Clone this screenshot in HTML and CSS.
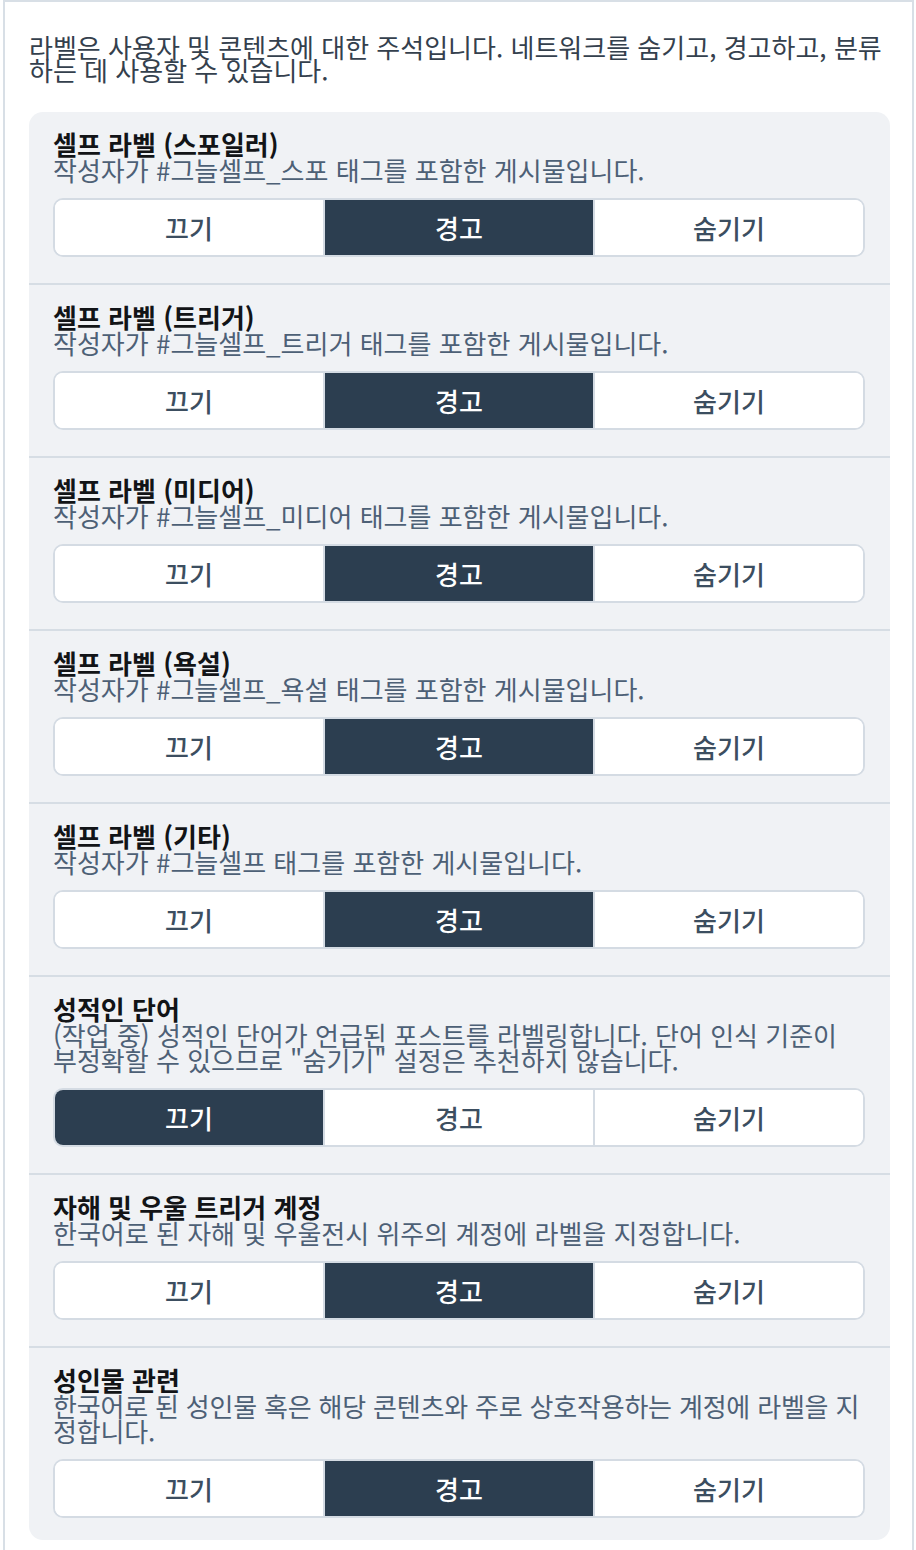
FILE: index.html
```html
<!DOCTYPE html>
<html lang="ko">
<head>
<meta charset="utf-8">
<title>라벨 설정</title>
<link rel="stylesheet" href="styles.css">
</head>
<body>
<div class="frame">
  <p class="intro">라벨은 사용자 및 콘텐츠에 대한 주석입니다. 네트워크를 숨기고, 경고하고, 분류하는 데 사용할 수 있습니다.</p>
  <div class="card">
    <section class="item">
      <h3 class="title">셀프 라벨 (스포일러)</h3>
      <p class="desc">작성자가 #그늘셀프_스포 태그를 포함한 게시물입니다.</p>
      <div class="seg"><button class="opt">끄기</button><button class="opt on">경고</button><button class="opt">숨기기</button></div>
    </section>
    <section class="item">
      <h3 class="title">셀프 라벨 (트리거)</h3>
      <p class="desc">작성자가 #그늘셀프_트리거 태그를 포함한 게시물입니다.</p>
      <div class="seg"><button class="opt">끄기</button><button class="opt on">경고</button><button class="opt">숨기기</button></div>
    </section>
    <section class="item">
      <h3 class="title">셀프 라벨 (미디어)</h3>
      <p class="desc">작성자가 #그늘셀프_미디어 태그를 포함한 게시물입니다.</p>
      <div class="seg"><button class="opt">끄기</button><button class="opt on">경고</button><button class="opt">숨기기</button></div>
    </section>
    <section class="item">
      <h3 class="title">셀프 라벨 (욕설)</h3>
      <p class="desc">작성자가 #그늘셀프_욕설 태그를 포함한 게시물입니다.</p>
      <div class="seg"><button class="opt">끄기</button><button class="opt on">경고</button><button class="opt">숨기기</button></div>
    </section>
    <section class="item">
      <h3 class="title">셀프 라벨 (기타)</h3>
      <p class="desc">작성자가 #그늘셀프 태그를 포함한 게시물입니다.</p>
      <div class="seg"><button class="opt">끄기</button><button class="opt on">경고</button><button class="opt">숨기기</button></div>
    </section>
    <section class="item">
      <h3 class="title">성적인 단어</h3>
      <p class="desc">(작업 중) 성적인 단어가 언급된 포스트를 라벨링합니다. 단어 인식 기준이 부정확할 수 있으므로 "숨기기" 설정은 추천하지 않습니다.</p>
      <div class="seg"><button class="opt on">끄기</button><button class="opt">경고</button><button class="opt">숨기기</button></div>
    </section>
    <section class="item">
      <h3 class="title">자해 및 우울 트리거 계정</h3>
      <p class="desc">한국어로 된 자해 및 우울전시 위주의 계정에 라벨을 지정합니다.</p>
      <div class="seg"><button class="opt">끄기</button><button class="opt on">경고</button><button class="opt">숨기기</button></div>
    </section>
    <section class="item last">
      <h3 class="title">성인물 관련</h3>
      <p class="desc tight">한국어로 된 성인물 혹은 해당 콘텐츠와 주로 상호작용하는 계정에 라벨을 지정합니다.</p>
      <div class="seg"><button class="opt">끄기</button><button class="opt on">경고</button><button class="opt">숨기기</button></div>
    </section>
  </div>
</div>
</body>
</html>
```

FILE: styles.css
```css
* { box-sizing: border-box; }
html, body {
  margin: 0;
  padding: 0;
  background: #ffffff;
}
body {
  font-family: "Noto Sans CJK KR", "Noto Sans", sans-serif;
}
.frame {
  margin: 0 2px 0 3px;
  border: 2px solid #d8dfe6;
  border-bottom: none;
  padding: 32px 22px 20px 24px;
  min-height: 1550px;
}
.intro {
  margin: 0 0 30px 0;
  font-size: 26px;
  line-height: 23px;
  padding: 1px 0;
  color: #34404d;
}
.card {
  background: #f0f2f5;
  border-radius: 14px;
  overflow: hidden;
}
.item {
  padding: 18px 25px 26px 24px;
  border-bottom: 2px solid #d6dde4;
}
.item.last {
  border-bottom: none;
  padding-bottom: 22px;
}
.title {
  margin: 0;
  font-size: 26px;
  line-height: 27px;
  font-weight: 700;
  color: #121417;
}
.desc {
  margin: 0 0 16px 0;
  font-size: 26px;
  line-height: 25px;
  color: #4d6076;
}
.desc.tight {
  letter-spacing: -0.2px;
}
.seg {
  display: flex;
  height: 59px;
  border: 2px solid #d4dbe3;
  border-radius: 10px;
  overflow: hidden;
  background: #ffffff;
}
.opt {
  flex: 1 1 0;
  border: none;
  border-left: 2px solid #d4dbe3;
  background: #ffffff;
  font-family: inherit;
  font-size: 26px;
  font-weight: 500;
  color: #3c4e60;
  padding: 0;
  margin: 0;
}
.opt:first-child { border-left: none; }
.opt.on {
  background: #2c3e50;
  color: #ffffff;
}
```
